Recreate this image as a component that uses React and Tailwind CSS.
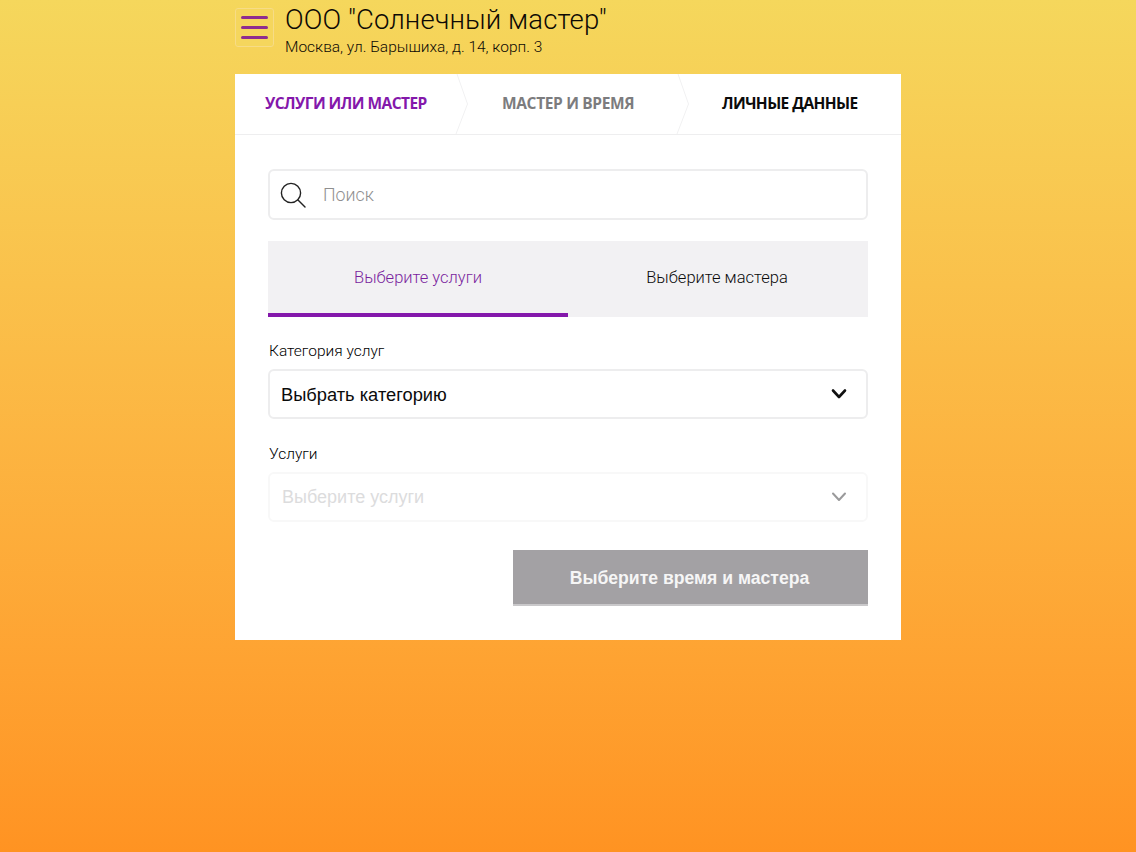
import React from "react";

const Chevron = ({ className, sw = "2.6" }) => (
  <svg viewBox="0 0 18 12" className={className} fill="none" stroke="currentColor" strokeWidth={sw} strokeLinecap="round" strokeLinejoin="round">
    <path d="M3 2.5l6 6.5 6-6.5" />
  </svg>
);

const Sep = () => (
  <svg viewBox="0 0 14 60" className="absolute top-0 right-[-1px] w-[14px] h-[60px]" fill="none" stroke="#f1f1f2" strokeWidth="1">
    <path d="M2 0L12.5 30L1 60" />
  </svg>
);

export default function App() {
  return (
    <div className="min-h-[852px] w-full bg-gradient-to-b from-[#f5d75c] to-[#ff9322] font-['Roboto',sans-serif]">
      <div className="ml-[235px] w-[666px] pb-[212px]">
        <header className="flex h-[74px] items-start">
          <div className="mt-[8px] flex h-[39px] w-[39px] flex-col items-center justify-center gap-[7px] rounded-[3px] border border-[#f7dc86] bg-[#f5d65d]">
            <span className="block h-[3px] w-[27px] rounded-sm bg-[#8e2c8f]"></span>
            <span className="block h-[3px] w-[27px] rounded-sm bg-[#8e2c8f]"></span>
            <span className="block h-[3px] w-[27px] rounded-sm bg-[#8e2c8f]"></span>
          </div>
          <div className="ml-[11px] pt-[3px]">
            <div className="text-[27.5px] font-light leading-[34px] tracking-[0.1px] text-[#0d0905]">ООО "Солнечный мастер"</div>
            <div className="text-[15.5px] font-light leading-[20px] text-[#0d0905]">Москва, ул. Барышиха, д. 14, корп. 3</div>
          </div>
        </header>

        <main className="h-[566px] bg-white">
          <nav className="flex h-[61px] border-b border-[#eeeeef] font-['Open_Sans',sans-serif] text-[15.5px] font-bold leading-[59px]">
            <div className="relative w-[233px] pl-[30px] tracking-[-0.55px] text-[#8418ab]">
              УСЛУГИ ИЛИ МАСТЕР
              <Sep />
            </div>
            <div className="relative w-[221px] pl-[34px] tracking-[-0.35px] text-[#7c7c7e]">
              МАСТЕР И ВРЕМЯ
              <Sep />
            </div>
            <div className="pl-[33px] tracking-[-0.58px] text-[#0b0b0b]">ЛИЧНЫЕ ДАННЫЕ</div>
          </nav>

          <div className="px-[33px] pt-[34px]">
            <div className="flex h-[51px] w-[600px] items-center rounded-[6px] border-2 border-[#ededee] pl-[10px]">
              <svg viewBox="0 0 26 26" className="h-[26px] w-[26px]" fill="none" stroke="#222222" strokeWidth="1.4" strokeLinecap="round">
                <circle cx="11" cy="11" r="9.6" />
                <path d="M18 18l7 7" />
              </svg>
              <span className="ml-[17px] pt-[2px] text-[17.8px] font-light text-[#8f8f8f]">Поиск</span>
            </div>

            <div className="mt-[21px] flex h-[76px] w-[600px] bg-[#f2f1f3] text-[16.5px] font-light">
              <div className="flex w-1/2 items-center justify-center border-b-[4px] border-[#8418ab] pt-[2px] text-[#7a1f9e]">Выберите услуги</div>
              <div className="flex w-1/2 items-center justify-center border-b-[4px] border-transparent pt-[2px] pr-[2px] text-[#0b0b0b]">Выберите мастера</div>
            </div>

            <label className="mt-[24px] block pl-[1px] text-[15.5px] font-light leading-[20px] text-black">Категория услуг</label>
            <div className="mt-[8px] flex h-[50px] w-[600px] items-center justify-between rounded-[6px] border-2 border-[#ededee] pl-[11px] pr-[18px] font-['Liberation_Sans',sans-serif] text-[18.3px] text-[#0b0b0b]">
              <span className="pt-[1px]">Выбрать категорию</span>
              <Chevron className="h-[12px] w-[18px] text-[#111111]" />
            </div>

            <label className="mt-[25px] block pl-[1px] text-[15.5px] font-light leading-[20px] text-black">Услуги</label>
            <div className="mt-[8px] flex h-[50px] w-[600px] items-center justify-between rounded-[6px] border-2 border-[#f8f8f8] pl-[12px] pr-[18px] font-['Liberation_Sans',sans-serif] text-[18px] text-[#dcdcdd]">
              <span>Выберите услуги</span>
              <Chevron sw="2" className="h-[12px] w-[18px] text-[#9a9a9b]" />
            </div>

            <div className="mt-[28px] flex justify-end">
              <button className="h-[56px] w-[355px] border-b-2 border-[#c9c8ca] bg-[#a3a1a4] pt-[3px] pr-[2px] font-['Liberation_Sans',sans-serif] text-[17.6px] font-bold text-[#f6f6f6]">
                Выберите время и мастера
              </button>
            </div>
          </div>
        </main>
      </div>
    </div>
  );
}
